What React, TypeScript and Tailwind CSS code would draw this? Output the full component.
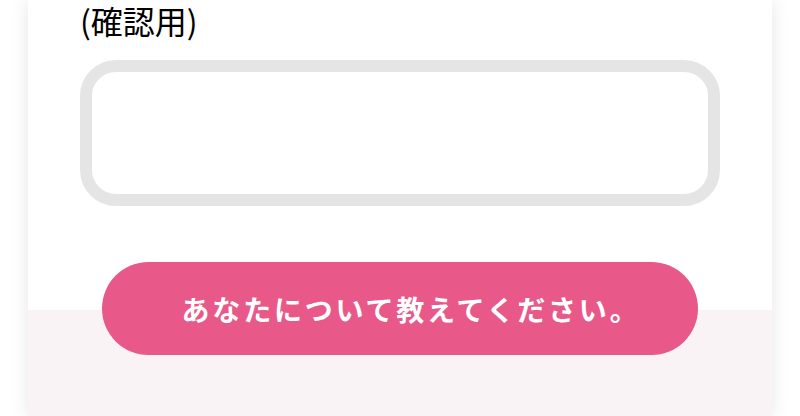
export default function App() {
  return (
    <div
      className="min-h-[416px] w-full overflow-hidden bg-white"
      style={{ fontFamily: '"Noto Sans CJK JP", "Noto Sans", sans-serif' }}
    >
      <div className="mx-[28px] flex min-h-[416px] flex-col bg-white shadow-[0_0_18px_rgba(0,0,0,0.10)]">
        {/* 確認用フィールド */}
        <div className="h-[310px] px-[52px]">
          <label className="block text-[32px] leading-[41px] text-black">(確認用)</label>
          <input
            type="password"
            className="mt-[19px] block h-[146px] w-full rounded-[36px] border-[12px] border-[#e5e5e5] bg-white px-6 text-2xl outline-none"
          />
        </div>

        {/* 送信エリア */}
        <div className="flex flex-1 justify-center bg-[#f9f3f6] pb-10">
          <button className="relative -mt-[48px] h-[93px] w-[596px] rounded-full bg-[#e8598a] pl-[22px] text-[28px] font-bold tracking-[2.8px] text-white">
            あなたについて教えてください。
          </button>
        </div>
      </div>
    </div>
  );
}
